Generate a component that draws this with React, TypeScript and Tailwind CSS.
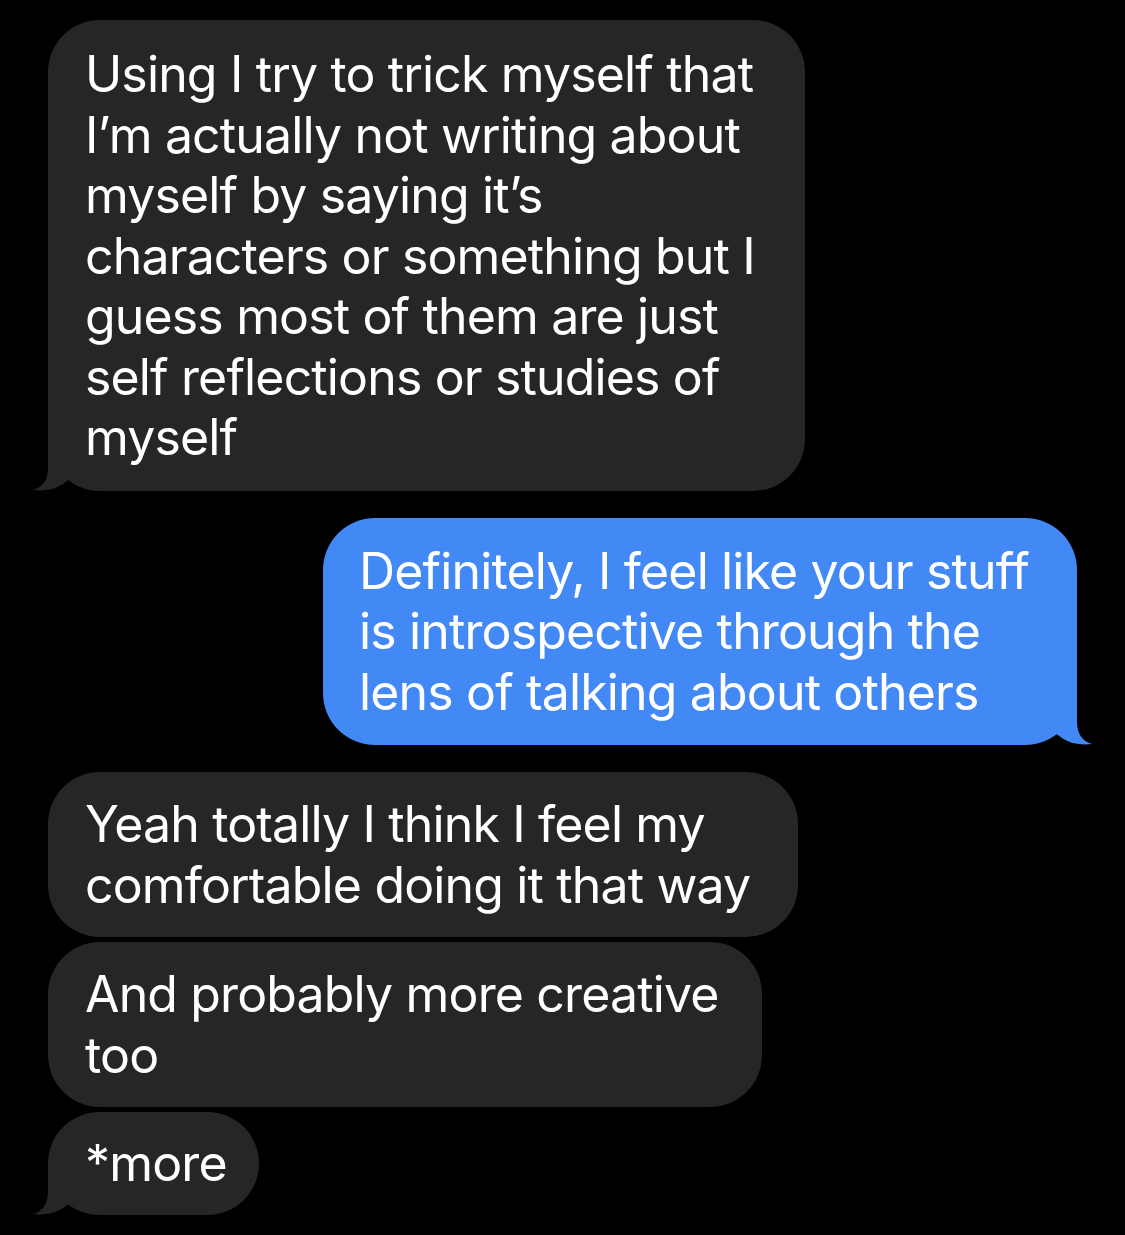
import React from "react";

const GRAY = "#262628";
const BLUE = "#4389F6";

function LeftTail({ color }: { color: string }) {
  return (
    <svg
      className="absolute bottom-0 left-[-16px]"
      width="60"
      height="52"
      viewBox="0 0 60 52"
    >
      <path
        d="M16 0 L16 28 C16 41 11 48 1 51 C14 52.5 26 50 35 42 L58 30 L58 0 Z"
        fill={color}
      />
    </svg>
  );
}

function RightTail({ color }: { color: string }) {
  return (
    <svg
      className="absolute bottom-0 right-[-16px]"
      width="60"
      height="52"
      viewBox="0 0 60 52"
    >
      <path
        d="M44 0 L44 28 C44 41 49 48 59 51 C46 52.5 34 50 25 42 L2 30 L2 0 Z"
        fill={color}
      />
    </svg>
  );
}

function Bubble({
  lines,
  width,
  side,
  tail,
  py,
}: {
  lines: string[];
  width: string;
  side: "left" | "right";
  tail?: boolean;
  py: string;
}) {
  const color = side === "left" ? GRAY : BLUE;
  return (
    <div
      className={`relative rounded-[52px] ${width} ${py} ${
        side === "left" ? "bg-[#262628] pl-[37px] self-start" : "bg-[#4389F6] pl-[36px] self-end"
      }`}
    >
      {tail && (side === "left" ? <LeftTail color={color} /> : <RightTail color={color} />)}
      <div className="relative text-white text-[50px] leading-[60.5px] tracking-[-0.85px] whitespace-nowrap">
        {lines.map((l, i) => (
          <div key={i}>{l}</div>
        ))}
      </div>
    </div>
  );
}

export default function App() {
  return (
    <div
      className="w-[1125px] h-[1235px] bg-black flex flex-col px-[48px] pt-[20px] overflow-hidden"
      style={{ fontFamily: "Inter, 'Noto Sans', sans-serif" }}
    >
      <Bubble
        side="left"
        tail
        width="w-[757px]"
        py="pt-[24px] pb-[23px]"
        lines={[
          "Using I try to trick myself that",
          "I\u2019m actually not writing about",
          "myself by saying it\u2019s",
          "characters or something but I",
          "guess most of them are just",
          "self reflections or studies of",
          "myself",
        ]}
      />
      <div className="h-[27px]" />
      <Bubble
        side="right"
        tail
        width="w-[754px]"
        py="py-[23px]"
        lines={[
          "Definitely, I feel like your stuff",
          "is introspective through the",
          "lens of talking about others",
        ]}
      />
      <div className="h-[27px]" />
      <Bubble
        side="left"
        width="w-[750px]"
        py="py-[22px]"
        lines={["Yeah totally I think I feel my", "comfortable doing it that way"]}
      />
      <div className="h-[5px]" />
      <Bubble
        side="left"
        width="w-[714px]"
        py="py-[22px]"
        lines={["And probably more creative", "too"]}
      />
      <div className="h-[5px]" />
      <Bubble side="left" tail width="w-[211px]" py="py-[21px]" lines={["*more"]} />
    </div>
  );
}
